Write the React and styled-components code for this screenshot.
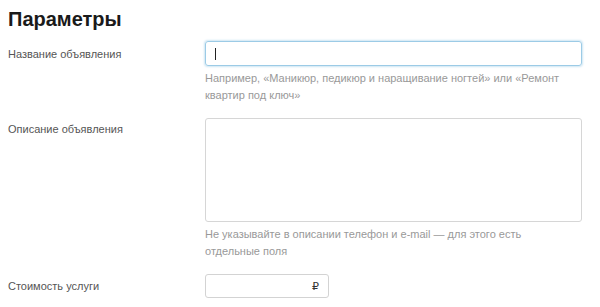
import React from 'react';
import styled, { createGlobalStyle } from 'styled-components';

const GlobalStyle = createGlobalStyle`
  html, body {
    margin: 0;
    padding: 0;
    background: #fff;
  }
  body {
    font-family: "Liberation Sans", Arial, sans-serif;
    color: #333;
  }
`

const Page = styled.div`
  width: 600px;
  height: 307px;
  padding: 7px 8px 0 8px;
  box-sizing: border-box;
  overflow: hidden;
`

const Title = styled.h2`
  margin: 0 0 10px 0;
  font-size: 20px;
  line-height: 24px;
  font-weight: bold;
  color: #1a1a1a;
`

const Form = styled.div`
  display: flex;
  flex-direction: column;
`

const Row = styled.div`
  display: grid;
  grid-template-columns: 197px 377px;
  margin-bottom: ${p => p.$gap || 0}px;
`

const Label = styled.div`
  font-size: 11px;
  line-height: 14px;
  color: #555;
  padding-top: ${p => p.$top || 0}px;
`

const Field = styled.div`
  display: flex;
  flex-direction: column;
`

const TextInput = styled.div`
  height: ${p => p.$height || 25}px;
  box-sizing: border-box;
  border: 1px solid ${p => (p.$focused ? '#9ccbe6' : '#d3d3d3')};
  border-radius: 3px;
  box-shadow: ${p => (p.$focused ? '0 0 2px 1px #cfe6f3' : 'none')};
  width: ${p => p.$width || '100%'};
  display: flex;
  align-items: center;
  padding: 0 9px 0 9px;
  font-size: 13px;
`

const Caret = styled.span`
  width: 1px;
  height: 12px;
  background: #222;
`

const Currency = styled.span`
  margin-left: auto;
  font-family: "DejaVu Sans", sans-serif;
  font-size: 11px;
  color: #333;
`

const TextArea = styled.div`
  height: 104px;
  box-sizing: border-box;
  border: 1px solid #d6d6d6;
  border-radius: 3px;
`

const Hint = styled.div`
  margin-top: 4px;
  font-size: 11px;
  line-height: 17px;
  color: #999;
  padding-right: 20px;
`

export default function App() {
  return (
    <Page>
      <GlobalStyle />
      <Title>Параметры</Title>
      <Form>
        <Row $gap={14}>
          <Label $top={6}>Название объявления</Label>
          <Field>
            <TextInput $focused>
              <Caret />
            </TextInput>
            <Hint>
              Например, «Маникюр, педикюр и наращивание ногтей» или «Ремонт квартир под ключ»
            </Hint>
          </Field>
        </Row>
        <Row $gap={14}>
          <Label $top={4}>Описание объявления</Label>
          <Field>
            <TextArea />
            <Hint>
              Не указывайте в описании телефон и e-mail — для этого есть отдельные поля
            </Hint>
          </Field>
        </Row>
        <Row>
          <Label $top={5}>Стоимость услуги</Label>
          <Field>
            <TextInput $width="124px" $height={24}>
              <Currency>₽</Currency>
            </TextInput>
          </Field>
        </Row>
      </Form>
    </Page>
  );
}
